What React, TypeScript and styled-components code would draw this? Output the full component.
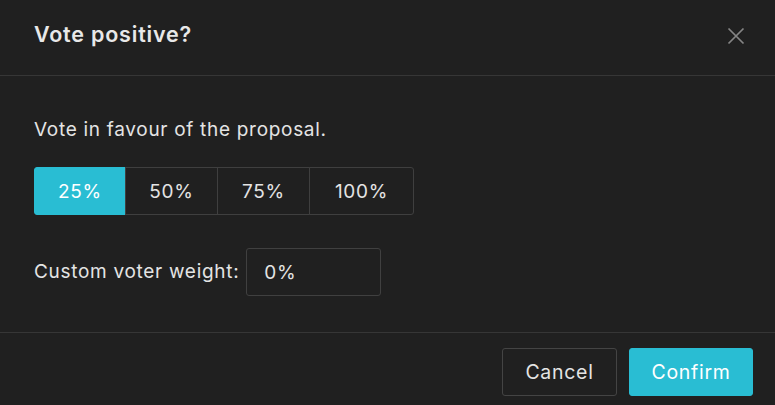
import React, {useState} from 'react';
import styled, {createGlobalStyle} from "styled-components";

const GlobalStyle = createGlobalStyle`
  html, body {
    margin: 0;
    padding: 0;
    background: #202020;
  }
  body {
    font-family: Inter, "Noto Sans", sans-serif;
    -webkit-font-smoothing: antialiased;
  }
`;

const Modal = styled.div`
  width: 775px;
  height: 405px;
  background: #202020;
  color: #e4e4e4;
  display: flex;
  flex-direction: column;
  box-sizing: border-box;
`;

const Header = styled.div`
  height: 76px;
  box-sizing: border-box;
  display: flex;
  align-items: center;
  justify-content: space-between;
  padding: 0 30px 0 34px;
  border-bottom: 1px solid #363636;
`;

const Title = styled.h2`
  margin: 0 0 7px;
  font-size: 21.5px;
  font-weight: 600;
  letter-spacing: 0.8px;
  color: #e8e8e8;
`;

const CloseButton = styled.button`
  background: none;
  border: none;
  padding: 0;
  width: 18px;
  height: 18px;
  margin-bottom: 3px;
  cursor: pointer;
  display: flex;
`;

const Body = styled.div`
  flex: 1;
  padding: 42px 34px 0;
  display: flex;
  flex-direction: column;
`;

const Text = styled.p`
  margin: 0;
  font-size: 19px;
  line-height: 24px;
  letter-spacing: 0.7px;
  color: #e4e4e4;
`;

const Segments = styled.div`
  display: flex;
  margin-top: 25px;
`;

const Segment = styled.button<{active: boolean; w: number}>`
  width: ${p => p.w}px;
  height: 48px;
  box-sizing: border-box;
  font-family: inherit;
  font-size: 19px;
  letter-spacing: 0.7px;
  color: ${p => p.active ? '#ffffff' : '#e4e4e4'};
  background: ${p => p.active ? '#29bdd3' : '#202020'};
  border: 1px solid ${p => p.active ? '#29bdd3' : '#3f3f3f'};
  margin-left: -1px;
  cursor: pointer;
  &:first-child {
    margin-left: 0;
    border-radius: 3px 0 0 3px;
  }
  &:last-child {
    border-radius: 0 3px 3px 0;
  }
`;

const WeightRow = styled.div`
  display: flex;
  align-items: center;
  gap: 7px;
  margin-top: 33px;
`;

const WeightInput = styled.input`
  width: 135px;
  height: 48px;
  box-sizing: border-box;
  background: #202020;
  border: 1px solid #404040;
  border-radius: 3px;
  padding: 0 17px;
  font-family: inherit;
  font-size: 19px;
  letter-spacing: 0.7px;
  color: #e4e4e4;
  outline: none;
`;

const Footer = styled.div`
  height: 73px;
  box-sizing: border-box;
  border-top: 1px solid #363636;
  display: flex;
  justify-content: flex-end;
  align-items: flex-start;
  gap: 12px;
  padding: 15px 22px 0;
`;

const Button = styled.button<{primary?: boolean; w: number}>`
  width: ${p => p.w}px;
  height: 48px;
  padding: 0;
  box-sizing: border-box;
  border-radius: 3px;
  font-family: inherit;
  font-size: 19.5px;
  letter-spacing: 0.7px;
  color: ${p => p.primary ? '#ffffff' : '#e4e4e4'};
  background: ${p => p.primary ? '#29bdd3' : '#202020'};
  border: 1px solid ${p => p.primary ? '#29bdd3' : '#444444'};
  cursor: pointer;
`;

const options = [
    {label: '25%', w: 92},
    {label: '50%', w: 93},
    {label: '75%', w: 93},
    {label: '100%', w: 105},
];

const App = () => {
    const [selected, setSelected] = useState('25%');
    return (
        <>
            <GlobalStyle/>
            <Modal>
                <Header>
                    <Title>Vote positive?</Title>
                    <CloseButton aria-label="close">
                        <svg width="18" height="18" viewBox="0 0 18 18">
                            <path d="M1.5 1.5L16.5 16.5M16.5 1.5L1.5 16.5" stroke="#858585" strokeWidth="1.7"/>
                        </svg>
                    </CloseButton>
                </Header>
                <Body>
                    <Text>Vote in favour of the proposal.</Text>
                    <Segments>
                        {options.map(o => (
                            <Segment key={o.label} w={o.w} active={selected === o.label} onClick={() => setSelected(o.label)}>
                                {o.label}
                            </Segment>
                        ))}
                    </Segments>
                    <WeightRow>
                        <Text>Custom voter weight:</Text>
                        <WeightInput defaultValue="0%"/>
                    </WeightRow>
                </Body>
                <Footer>
                    <Button w={115}>Cancel</Button>
                    <Button w={124} primary>Confirm</Button>
                </Footer>
            </Modal>
        </>
    );
};

export default App;
